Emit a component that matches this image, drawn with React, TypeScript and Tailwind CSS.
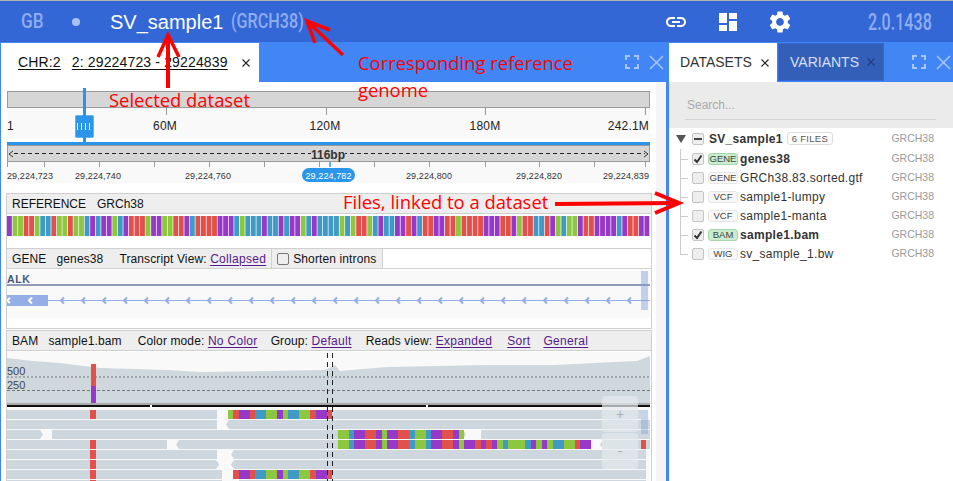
import React from 'react';
import { MdDashboard, MdLink, MdSettings } from 'react-icons/md';

const COLORS: Record<string, string> = { P: '#9639c8', G: '#8dc63f', R: '#e2504c', B: '#3f9bc6' };

const BASES =
  'PGGRRGBBRGGRGGBPBPPGBPRRRGPPGGRRPBRRRRPPPBGBBBPBBPBPPGBPBBBBGBGRRGBPBBPPRPBRRPPRRGRRRRPPPRRPGRRBBRPGBGGPRRPPPPBPRRPPGB';

type Seg = [number, number, string];

const BLOCK_A: Seg[] = [
  [228, 233, 'G'], [233, 239, 'R'], [239, 250, 'P'], [250, 255, 'R'], [255, 266, 'B'], [266, 277, 'G'],
  [277, 283, 'P'], [283, 288, 'G'], [288, 299, 'B'], [299, 310, 'G'], [310, 316, 'R'], [316, 327, 'P'], [327, 332, 'R'],
];

const BLOCK_B: Seg[] = [
  [338, 349, 'G'], [349, 354, 'B'], [354, 365, 'P'], [365, 376, 'R'], [376, 382, 'P'], [382, 387, 'G'],
  [387, 398, 'P'], [398, 409, 'R'], [409, 415, 'B'], [415, 426, 'G'], [426, 431, 'B'], [431, 442, 'P'],
  [442, 453, 'R'], [453, 459, 'P'], [459, 464, 'G'],
];

const BLOCK_C: Seg[] = [
  [464, 475, 'P'], [475, 481, 'R'], [481, 486, 'P'], [486, 492, 'R'], [492, 497, 'P'], [497, 503, 'G'],
  [503, 508, 'B'], [508, 525, 'G'], [525, 531, 'B'], [531, 536, 'P'], [536, 542, 'G'], [542, 547, 'P'],
  [547, 553, 'G'], [553, 564, 'B'], [564, 575, 'G'], [575, 580, 'R'], [580, 591, 'P'],
];

const RED: Seg = [90, 96, 'R'];

const READ_ROWS: { reads: [number, number, 'l' | 'r' | ''][]; segs: Seg[] }[] = [
  { reads: [[7, 217, ''], [228, 641, '']], segs: [RED, ...BLOCK_A] },
  { reads: [[7, 217, ''], [226, 650, 'l']], segs: [] },
  { reads: [[7, 43, 'r'], [52, 466, 'r'], [481, 650, '']], segs: BLOCK_B },
  { reads: [[7, 167, ''], [176, 591, 'l'], [600, 650, 'l']], segs: [RED, ...BLOCK_B, ...BLOCK_C, [641, 646, 'R']] },
  { reads: [[7, 217, ''], [231, 646, 'l']], segs: [RED] },
  { reads: [[7, 219, 'r'], [231, 646, 'l']], segs: [RED] },
  { reads: [[7, 222, ''], [233, 646, '']], segs: [RED, ...BLOCK_A.slice(1)] },
  { reads: [[7, 222, ''], [239, 646, '']], segs: [RED] },
];

const readPoints = (x1: number, x2: number, y: number, dir: string) => {
  const h = 9;
  if (dir === 'l') return `${x1 + 3},${y} ${x2},${y} ${x2},${y + h} ${x1 + 3},${y + h} ${x1},${y + h / 2}`;
  if (dir === 'r') return `${x1},${y} ${x2 - 3},${y} ${x2},${y + h / 2} ${x2 - 3},${y + h} ${x1},${y + h}`;
  return `${x1},${y} ${x2},${y} ${x2},${y + h} ${x1},${y + h}`;
};

const COVERAGE =
  '7,400 7,355 33,358 60,360 100,365 167,367 200,369 266,368 325,367 335,362 340,368 387,364 487,362 553,362 637,358 650,353 650,400';

const Link: React.FC<{ children: React.ReactNode }> = ({ children }) => (
  <span className="tracking-[0.3px] text-[#551a8b] underline underline-offset-2">{children}</span>
);

const TrackHeader: React.FC<{ children: React.ReactNode; className?: string }> = ({ children, className }) => (
  <div className={`flex h-[20px] items-center whitespace-nowrap border-b border-[#d0d0d0] bg-[#eeeeee] pl-[5px] text-[12px] tracking-[0.12px] text-[#111] ${className ?? ''}`}>
    {children}
  </div>
);

const PanelControls = () => (
  <div className="flex items-center justify-end gap-[10px] pr-[2px]">
    <svg width="14" height="14" viewBox="0 0 14 14" fill="none" stroke="#a9c6fa" strokeWidth="2">
      <path d="M1 5V1h4M9 1h4v4M13 9v4H9M5 13H1V9" />
    </svg>
    <svg width="15" height="15" viewBox="0 0 15 15" fill="none" stroke="#a9c6fa" strokeWidth="1.5">
      <path d="M1 1l13 13M14 1L1 14" />
    </svg>
  </div>
);

const Close: React.FC<{ color?: string }> = ({ color = '#222' }) => (
  <svg width="8" height="8" viewBox="0 0 8 8" fill="none" stroke={color} strokeWidth="1.1">
    <path d="M.5.5l7 7M7.5.5l-7 7" />
  </svg>
);

const RulerTrack = () => (
  <svg width="646" height="97" viewBox="6 88 646 97" className="block" fontFamily="'Liberation Sans', sans-serif">
    <rect x="7.5" y="91.5" width="642" height="16" fill="#d6d6d6" stroke="#9a9a9a" />
    <rect x="7" y="108" width="643" height="30" fill="#f9f9f9" />
    {[166, 326, 485, 645].map((x) => (
      <line key={x} x1={x + 0.5} x2={x + 0.5} y1="108" y2="115" stroke="#999" />
    ))}
    <text x="7" y="130" fontSize="12" letterSpacing="0.2" fill="#222">1</text>
    <text x="165" y="130" fontSize="12" letterSpacing="0.2" textAnchor="middle" fill="#222">60M</text>
    <text x="325" y="130" fontSize="12" letterSpacing="0.2" textAnchor="middle" fill="#222">120M</text>
    <text x="485" y="130" fontSize="12" letterSpacing="0.2" textAnchor="middle" fill="#222">180M</text>
    <text x="649" y="130" fontSize="12" letterSpacing="0.2" textAnchor="end" fill="#222">242.1M</text>

    <rect x="75.5" y="115.5" width="18" height="22" rx="1" fill="#2b95e9" stroke="#63b3f0" />
    <rect x="83" y="88" width="3" height="55" fill="#2b95e9" />
    {[77, 81, 85, 89].map((x) => (
      <line key={x} x1={x + 0.5} x2={x + 0.5} y1="123" y2="130" stroke="#fff" />
    ))}

    <rect x="7" y="142" width="643" height="3" fill="#2b95e9" />
    <rect x="7.5" y="145.5" width="642" height="16" fill="#d6d6d6" stroke="#9a9a9a" />
    <line x1="14" x2="645" y1="153.5" y2="153.5" stroke="#222" strokeDasharray="4 3" />
    <path d="M13 151l-4 3 4 3M644 151l4 3-4 3" fill="none" stroke="#333" />
    <rect x="311" y="147" width="34" height="14" fill="#d6d6d6" />
    <text x="328" y="159" fontSize="12" fontWeight="bold" textAnchor="middle" fill="#333">116bp</text>

    <rect x="7" y="162" width="643" height="21" fill="#f9f9f9" />
    {[7, 44, 99, 154, 209, 264, 319, 374, 429, 485, 539, 594, 645].map((x) => (
      <line key={x} x1={x + 0.5} x2={x + 0.5} y1="162" y2="167" stroke="#999" />
    ))}
    <rect x="329" y="162" width="2" height="5" fill="#63b3f0" />
    <g fontSize="9" letterSpacing="0.1" fill="#333">
      <text x="7" y="179">29,224,723</text>
      <text x="98" y="179" textAnchor="middle">29,224,740</text>
      <text x="208" y="179" textAnchor="middle">29,224,760</text>
      <text x="429" y="179" textAnchor="middle">29,224,800</text>
      <text x="539" y="179" textAnchor="middle">29,224,820</text>
      <text x="649" y="179" textAnchor="end">29,224,839</text>
    </g>
    <rect x="302" y="168" width="53" height="14" rx="7" fill="#2b95e9" />
    <text x="328.5" y="179" fontSize="9" letterSpacing="0.1" textAnchor="middle" fill="#fff">29,224,782</text>
  </svg>
);

const SequenceBars = () => (
  <svg width="643" height="31" viewBox="0 0 643 31" className="block">
    {Array.from({ length: 116 }).map((_, i) => {
      const step = 643 / 116;
      const base = BASES[i % BASES.length];
      return <rect key={i} x={i * step} y="2" width={step - 0.7} height="20" fill={COLORS[base]} />;
    })}
  </svg>
);

const GeneTrack = () => {
  const marks: number[] = [];
  for (let x = 62; x < 650; x += 21) marks.push(x);
  return (
    <svg width="643" height="59" viewBox="7 268 643 59" className="block" fontFamily="'Liberation Sans', sans-serif">
      <rect x="7" y="269" width="643" height="48" fill="#f9f9f9" />
      <text x="7" y="282" fontSize="10.5" fontWeight="bold" letterSpacing="0.6" fill="#46587f">ALK</text>
      <rect x="7" y="283" width="643" height="2" fill="#8e9ab8" />
      <line x1="48" x2="650" y1="299.5" y2="299.5" stroke="#94aee8" />
      <rect x="7" y="294" width="41" height="11" fill="#94aee8" />
      <path d="M10 297l-3 2.5 3 2.5M32 296.5l-3 3 3 3" fill="none" stroke="#fff" strokeWidth="2" />
      {marks.map((x) => (
        <path key={x} d={`M${x + 2} 296.5l-3 3 3 3`} fill="none" stroke="#94aee8" strokeWidth="2" />
      ))}
      <rect x="641" y="270" width="7" height="39" fill="#7f9bdc" fillOpacity="0.45" />
    </svg>
  );
};

const BamTrack = () => (
  <svg width="644" height="133" viewBox="7 348 644 133" className="block" fontFamily="'Liberation Sans', sans-serif">
    <rect x="7" y="349" width="643" height="52" fill="#f9f9f9" />
    <polygon points={COVERAGE} fill="#cfd8dd" />
    <line x1="7" x2="650" y1="374" y2="374" stroke="#777" strokeDasharray="2 2" />
    <line x1="7" x2="650" y1="387.5" y2="387.5" stroke="#777" strokeDasharray="3 2" />
    <text x="7" y="372" fontSize="11" fill="#444">500</text>
    <text x="7" y="386" fontSize="11" fill="#444">250</text>
    <rect x="91" y="361" width="5" height="22" fill="#e2504c" />
    <rect x="91" y="383" width="5" height="18" fill="#9639c8" />
    <rect x="7" y="400" width="643" height="2" fill="#aaaaaa" />
    <rect x="7" y="402" width="643" height="2" fill="#111" />
    <rect x="150" y="402" width="2" height="2" fill="#fff" />
    <rect x="426" y="402" width="2" height="2" fill="#fff" />
    <rect x="7" y="404" width="643" height="77" fill="#f9f9f9" />
    {READ_ROWS.map((row, i) => {
      const y = 407 + i * 10;
      return (
        <g key={i}>
          {row.reads.map(([a, b, dir], j) => (
            <polygon key={j} points={readPoints(a, b, y, dir)} fill="#cdd7dd" />
          ))}
          {row.segs.map(([a, b, c], j) => (
            <rect key={j} x={a} y={y} width={b - a} height="9" fill={COLORS[c]} />
          ))}
        </g>
      );
    })}
    <rect x="641" y="407" width="7" height="24" fill="#7f9bdc" fillOpacity="0.4" />
    <line x1="327.5" x2="327.5" y1="350" y2="481" stroke="#222" strokeDasharray="5 4" />
    <line x1="332.5" x2="332.5" y1="350" y2="481" stroke="#222" strokeDasharray="5 4" />
  </svg>
);

const ZoomButton: React.FC<{ label: string }> = ({ label }) => (
  <div className="flex h-[36px] w-[36px] items-center justify-center rounded-[3px] bg-[#e4e9ec]/70 text-[14px] text-[#a8b0b5]">
    {label}
  </div>
);

const Check: React.FC<{ state?: 'on' | 'mixed' }> = ({ state }) => (
  <span className="flex h-[12px] w-[12px] shrink-0 items-center justify-center rounded-[2px] border border-[#c4c4c4] bg-[#eeeeee]">
    {state === 'on' && (
      <svg width="10" height="10" viewBox="0 0 10 10" fill="none" stroke="#333" strokeWidth="2">
        <path d="M1.5 5.5l2.5 2.5 4.5-6.5" />
      </svg>
    )}
    {state === 'mixed' && <span className="h-[2px] w-[8px] bg-[#444]" />}
  </span>
);

const FILES = [
  { tag: 'GENE', name: 'genes38', on: true },
  { tag: 'GENE', name: 'GRCh38.83.sorted.gtf' },
  { tag: 'VCF', name: 'sample1-lumpy' },
  { tag: 'VCF', name: 'sample1-manta' },
  { tag: 'BAM', name: 'sample1.bam', on: true },
  { tag: 'WIG', name: 'sv_sample_1.bw' },
];

const Genome = () => <span className="ml-auto text-[10.5px] tracking-normal text-[#999]">GRCH38</span>;

const Tree = () => (
  <div className="pl-[7px] pr-[19px] pt-[1px] text-[12px] tracking-[0.3px] text-[#333]">
    <div className="mb-px flex h-[19px] items-center">
      <span className="h-0 w-0 border-x-[5px] border-t-[8px] border-x-transparent border-t-[#555]" />
      <span className="ml-[6px]"><Check state="mixed" /></span>
      <span className="ml-[5px] font-bold">SV_sample1</span>
      <span className="ml-[4px] rounded-[3px] border border-[#dddddd] px-[4px] text-[9.5px] leading-[11px] text-[#555]">6 FILES</span>
      <Genome />
    </div>
    {FILES.map((f, i) => (
      <div key={f.name} className="flex h-[19px] items-center">
        <span className="relative ml-[4px] h-full w-[12px] shrink-0">
          <span className={`absolute left-0 top-0 w-px bg-[#cccccc] ${i === FILES.length - 1 ? 'h-1/2' : 'h-full'}`} />
          <span className="absolute left-0 top-1/2 h-px w-[8px] bg-[#cccccc]" />
        </span>
        <Check state={f.on ? 'on' : undefined} />
        <span
          className={`ml-[4px] mr-[2px] w-[30px] shrink-0 rounded-[3px] border text-center text-[9.5px] leading-[10px] tracking-normal text-[#444] ${
            f.on ? 'border-[#a5d8ad] bg-[#c8eccd]' : 'border-[#e6e6e6] bg-[#f8f8f8]'
          }`}
        >
          {f.tag}
        </span>
        <span className={f.on ? 'font-bold' : ''}>{f.name}</span>
        <Genome />
      </div>
    ))}
  </div>
);

const Annotations = () => (
  <>
    <svg className="pointer-events-none absolute inset-0" width="953" height="481" fill="none" stroke="#f00">
      <path d="M168 88V37" strokeWidth="4" />
      <path d="M158 57l10-22 11 22" strokeWidth="3.5" />
      <path d="M343 55L309 23" strokeWidth="3.5" />
      <path d="M315 43l-8-22 23 9" strokeWidth="3.5" />
      <path d="M555 204l120-1" strokeWidth="4" />
      <path d="M655 193l24 10-24 10" strokeWidth="4" />
    </svg>
    <div className="pointer-events-none absolute left-[358px] top-[49px] font-['Open_Sans',sans-serif] text-[18.4px] leading-[27px] text-[#ff0000]">
      Corresponding reference
      <br />
      genome
    </div>
    <div className="pointer-events-none absolute left-[109px] top-[86px] font-['Open_Sans',sans-serif] text-[18.4px] leading-[27px] text-[#ff0000]">
      Selected dataset
    </div>
    <div className="pointer-events-none absolute left-[343px] top-[188px] font-['Open_Sans',sans-serif] text-[18.4px] leading-[27px] text-[#ff0000]">
      Files, linked to a dataset
    </div>
  </>
);

export default function App() {
  return (
    <div className="relative flex h-[481px] w-[953px] flex-col overflow-hidden bg-white font-['Liberation_Sans',sans-serif]">
      <div className="h-px bg-[#b4b4b4]" />

      {/* Header Bar */}
      <header className="flex h-[41px] shrink-0 items-center bg-[#3367d6] text-white">
        <span className="ml-[21px] w-[51px] origin-left scale-x-[0.82] font-['Roboto',sans-serif] text-[21px] font-medium text-[#8fadf0]">GB</span>
        <span className="h-[8px] w-[8px] rounded-full bg-[#a9c2f5]" />
        <span className="ml-[30px] text-[20px]">SV_sample1</span>
        <span className="ml-[8px] origin-left scale-x-[0.77] whitespace-nowrap font-['Roboto',sans-serif] text-[21px] font-medium text-[#8fadf0]">(GRCH38)</span>
        <span className="ml-auto flex items-center">
          <MdLink size={24} />
          <MdDashboard size={24} className="ml-[28px]" />
          <MdSettings size={26} className="ml-[27px]" />
          <span className="ml-[75px] w-[85px] origin-left scale-x-[0.67] whitespace-nowrap font-['Roboto',sans-serif] text-[24px] font-medium text-[#8fadf0]">2.0.1438</span>
        </span>
      </header>

      <div className="flex min-h-0 flex-1 bg-[#4285f4]">
        {/* Left Panel */}
        <section className="flex w-[666px] shrink-0 flex-col pl-px">
          <div className="flex h-[40px] shrink-0 items-end">
            <div className="flex h-[39px] w-[258px] shrink-0 items-center whitespace-nowrap bg-white pl-[17px] text-[14px] tracking-[0.15px] text-[#111]">
              <span className="underline underline-offset-2">CHR:2</span>
              <span className="ml-[11px] underline underline-offset-2">2: 29224723 - 29224839</span>
              <span className="ml-[14px]"><Close /></span>
            </div>
            <div className="flex-1 self-center"><PanelControls /></div>
          </div>
          <div className="flex min-h-0 flex-1 bg-white">
            <div className="w-[646px] pl-[5px] pt-[6px]">
              <RulerTrack />
              <div className="mt-[8px] h-[55px] w-[646px] border border-b-0 border-[#cfcfcf]">
                <TrackHeader className="tracking-normal">
                  REFERENCE<span className="ml-[11px]">GRCh38</span>
                </TrackHeader>
                <SequenceBars />
              </div>
              <div className="h-[81px] w-[646px] border border-[#cfcfcf]">
                <TrackHeader>
                  GENE<span className="ml-[10px]">genes38</span>
                  <span className="ml-[16px]">Transcript View:&nbsp;</span>
                  <Link>Collapsed</Link>
                  <span className="ml-[5px] h-full border-l border-[#d0d0d0]" />
                  <span className="ml-[5px] flex items-center gap-[4px] pr-[6px]">
                    <span className="h-[12px] w-[12px] rounded-[2px] border border-[#777] bg-[#eee]" />
                    Shorten introns
                  </span>
                  <span className="h-full border-l border-[#d0d0d0]" />
                  <span className="h-full flex-1 bg-white" />
                </TrackHeader>
                <GeneTrack />
              </div>
              <div className="relative mt-px h-[155px] w-[646px] border border-[#cfcfcf]">
                <TrackHeader>
                  BAM<span className="ml-[10px]">sample1.bam</span>
                  <span className="ml-[16px]">Color mode:&nbsp;</span>
                  <Link>No Color</Link>
                  <span className="ml-[13px]">Group:&nbsp;</span>
                  <Link>Default</Link>
                  <span className="ml-[14px]">Reads view:&nbsp;</span>
                  <Link>Expanded</Link>
                  <span className="ml-[15px]"><Link>Sort</Link></span>
                  <span className="ml-[13px]"><Link>General</Link></span>
                </TrackHeader>
                <BamTrack />
                <div className="absolute left-[595px] top-[65px] flex flex-col gap-px">
                  <ZoomButton label="+" />
                  <ZoomButton label="-" />
                </div>
              </div>
            </div>
            <div className="ml-auto w-[10px] bg-[#f5f5f5]" />
          </div>
        </section>

        {/* Right Panel */}
        <section className="ml-[3px] flex min-w-0 flex-1 flex-col">
          <div className="flex h-[40px] shrink-0 items-end text-[14px]">
            <div className="flex h-[39px] w-[108px] items-center bg-white pl-[11px] text-[#333]">
              DATASETS
              <span className="ml-[9px]"><Close /></span>
            </div>
            <div className="ml-px mt-[1px] flex h-[38px] w-[106px] items-center self-start border border-[#3367d6] bg-[#345fb8] pl-[11px] text-[#d5e0f7]">
              VARIANTS
              <span className="ml-[8px]"><Close color="#1f3c7a" /></span>
            </div>
            <div className="flex-1 self-center"><PanelControls /></div>
          </div>
          <div className="min-h-0 flex-1 bg-white">
            <div className="h-[46px] bg-[#ebebeb] px-[16px] pt-[14px]">
              <div className="h-[24px] w-[251px] border-b border-[#d4d4d4] pl-[2px] text-[12px] leading-[18px] text-[#aaaaaa]">Search...</div>
            </div>
            <Tree />
          </div>
        </section>
      </div>

      <Annotations />
    </div>
  );
}
